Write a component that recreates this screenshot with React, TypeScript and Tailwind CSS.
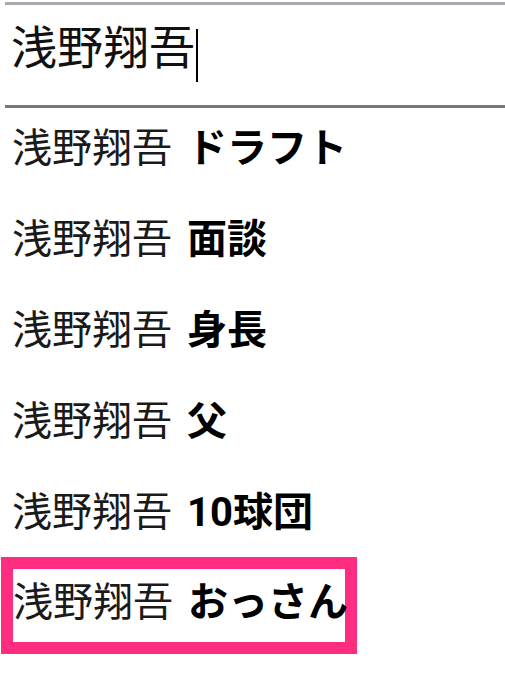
import React from 'react';

const font = { fontFamily: 'Roboto, "Noto Sans CJK JP", "Noto Sans", sans-serif' };

const keywords = ['ドラフト', '面談', '身長', '父', '10球団'];

const Row: React.FC<{ word: string }> = ({ word }) => (
  <div className="h-[91px] flex items-center pb-[10px] pl-[12px] text-[40px] leading-none whitespace-nowrap text-[#1a1a1a]">
    <span>浅野翔吾</span>
    <span className="ml-[15px] font-bold text-black">{word}</span>
  </div>
);

const App: React.FC = () => {
  return (
    <div className="w-[505px] h-[675px] bg-white overflow-hidden" style={font}>
      <div className="pt-[2px] pl-[5px]">
        <div className="h-[3px] bg-[#a9a9b0]" />
      </div>

      {/* search field */}
      <div className="h-[100px] flex items-start pl-[11px] text-[46px] leading-none text-[#111]">
        <span className="mt-[20px]">浅野翔吾</span>
        <span className="inline-block w-[2px] h-[53px] bg-black ml-[1px] mt-[24px]" />
      </div>

      <div className="pl-[5px]">
        <div className="h-[3px] bg-[#787878]" />
      </div>

      {keywords.map((w) => (
        <Row key={w} word={w} />
      ))}

      <div className="h-[91px] flex items-start pl-[1px]">
        <div className="-mt-[6px] w-[356px] h-[97px] border-[12px] border-[#ff2d80] flex items-center pb-[6px] text-[40px] leading-none whitespace-nowrap text-[#1a1a1a]">
          <span>浅野翔吾</span>
          <span className="ml-[15px] font-bold text-black">おっさん</span>
        </div>
      </div>
    </div>
  );
};

export default App;
